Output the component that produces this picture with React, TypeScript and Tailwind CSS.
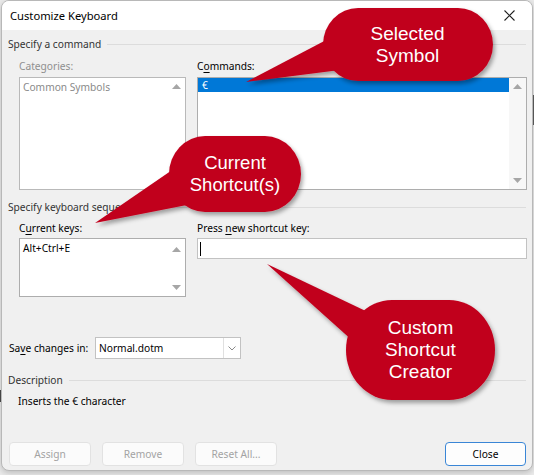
import React from 'react';

const UI = { fontFamily: '"Noto Sans", "Segoe UI", sans-serif' };
const CALLOUT = { fontFamily: '"Liberation Sans", Arial, sans-serif' };

const Up = () => (
  <svg width="9" height="5" viewBox="0 0 9 5">
    <path d="M0 5 L4.5 0 L9 5 Z" fill="#a6a6a6" />
  </svg>
);

const Down = () => (
  <svg width="9" height="5" viewBox="0 0 9 5">
    <path d="M0 0 L4.5 5 L9 0 Z" fill="#a6a6a6" />
  </svg>
);

const GroupHeader: React.FC<{ label: string; className?: string }> = ({ label, className }) => (
  <div className={`flex items-center h-[16px] ${className ?? ''}`}>
    <span className="text-[#333] whitespace-nowrap">{label}</span>
    <div className="flex-1 h-px bg-[#dcdcdc] ml-[6px] mr-[1px]" />
  </div>
);

const Scrollbar: React.FC<{ top: number; bottom: number }> = ({ top, bottom }) => (
  <div className="w-[17px] flex flex-col items-center">
    <div style={{ marginTop: top }}>
      <Up />
    </div>
    <div className="flex-1" />
    <div style={{ marginBottom: bottom }}>
      <Down />
    </div>
  </div>
);

export default function App() {
  return (
    <div className="relative w-[534px] h-[475px] bg-[#ebebeb] overflow-hidden text-[10.2px] leading-[16px] text-black" style={UI}>
      <div className="absolute right-0 top-[95px] w-px h-[30px] bg-[#555]" />
      <div className="absolute left-0 top-[390px] w-px h-[12px] bg-[#444]" />

      {/* dialog window */}
      <div className="ml-px w-[532px] h-[471px] bg-[#f0f0f0] border border-[#b8b8b8] rounded-[8px] overflow-hidden flex flex-col shadow-[0_2px_6px_rgba(0,0,0,0.2)]">
        <div className="h-[29px] bg-white flex items-center justify-between pl-[8px] pr-[17px] shrink-0">
          <span className="text-[11.2px] text-black pt-[1px]">Customize Keyboard</span>
          <svg width="11" height="11" viewBox="0 0 11 11">
            <path d="M0.5 0.5 L10.5 10.5 M10.5 0.5 L0.5 10.5" stroke="#222" strokeWidth="1.1" />
          </svg>
        </div>

        <div className="flex-1 pl-[6px] pr-[5px]">
          <GroupHeader label="Specify a command" className="mt-[6px]" />

          <div className="flex mt-[6px] pl-[11px] gap-[11px]">
            <div className="w-[167px]">
              <div className="text-[#8f8f8f] h-[16px]">Categories:</div>
              <div className="mt-[3px] h-[113px] bg-white border border-[#b9b9b9] flex">
                <div className="flex-1 pl-[3px] pt-[1px] text-[#8a8a8a]">Common Symbols</div>
                <Scrollbar top={6} bottom={6} />
              </div>
            </div>
            <div className="w-[330px]">
              <div className="h-[16px]">
                C<u className="underline-offset-2">o</u>mmands:
              </div>
              <div className="mt-[3px] h-[113px] bg-white border border-[#adadad] flex">
                <div className="flex-1">
                  <div className="h-[14px] bg-[#0078d7] text-white pl-[4px] leading-[14px]">€</div>
                </div>
                <div className="bg-[#f7f7f7] flex">
                  <Scrollbar top={6} bottom={6} />
                </div>
              </div>
            </div>
          </div>

          <GroupHeader label="Specify keyboard sequence" className="mt-[9px]" />

          <div className="flex mt-[5px] pl-[11px] gap-[11px]">
            <div className="w-[167px]">
              <div className="h-[16px]">
                C<u className="underline-offset-2">u</u>rrent keys:
              </div>
              <div className="mt-[2px] h-[59px] bg-white border border-[#adadad] flex">
                <div className="flex-1 pl-[3px] pt-[1px]">Alt+Ctrl+E</div>
                <Scrollbar top={8} bottom={6} />
              </div>
            </div>
            <div className="w-[330px]">
              <div className="h-[16px]">
                Press <u className="underline-offset-2">n</u>ew shortcut key:
              </div>
              <div className="mt-[2px] h-[21px] bg-white border border-[#c2c2c2] flex items-center pl-[2px]">
                <div className="w-px h-[14px] bg-black" />
              </div>
            </div>
          </div>

          <div className="flex items-center mt-[40px]">
            <span className="w-[87px] shrink-0 pl-[1px] whitespace-nowrap">
              Sa<u className="underline-offset-2">v</u>e changes in:
            </span>
            <div className="w-[146px] h-[22px] bg-white border border-[#c2c2c2] flex items-center">
              <span className="flex-1 pl-[3px]">Normal.dotm</span>
              <div className="w-px h-[20px] bg-[#e0e0e0]" />
              <div className="w-[16px] flex justify-center">
                <svg width="8" height="5" viewBox="0 0 8 5">
                  <path d="M0.5 0.5 L4 4 L7.5 0.5" stroke="#8a8a8a" fill="none" strokeWidth="1" />
                </svg>
              </div>
            </div>
          </div>

          <GroupHeader label="Description" className="mt-[13px]" />
          <div className="mt-[5px] ml-[10px]">Inserts the € character</div>

          <div className="flex mt-[33px] px-px">
            <div className="flex gap-[11px]">
              {['Assign', 'Remove', 'Reset All...'].map((b) => (
                <div
                  key={b}
                  className="w-[82px] h-[24px] rounded-[4px] bg-[#fbfbfb] border border-[#e2e2e2] text-[#a3a3a3] flex items-center justify-center"
                >
                  {b}
                </div>
              ))}
            </div>
            <div className="flex-1" />
            <div className="w-[81px] h-[24px] rounded-[4px] bg-[#fdfdfd] border border-[#3a86d6] flex items-center justify-center">
              Close
            </div>
          </div>
        </div>
      </div>

      {/* callout annotations */}
      <svg className="absolute inset-0 pointer-events-none" width="534" height="475" viewBox="0 0 534 475">
        <defs>
          <filter id="sh" x="-20%" y="-20%" width="140%" height="150%">
            <feDropShadow dx="2" dy="3" stdDeviation="2" floodColor="#000" floodOpacity="0.35" />
          </filter>
        </defs>
        <g fill="#c1001f" filter="url(#sh)">
          <path d="M330 38 L246 82 L340 70 Z" />
          <path d="M358 8 H458 A35 36.5 0 0 1 458 81 H358 A35 36.5 0 0 1 358 8 Z" />
          <path d="M178 166 L95 223 L192 204 Z" />
          <path d="M205 136 H265 A36 38 0 0 1 265 212 H205 A36 38 0 0 1 205 136 Z" />
          <path d="M372 314 L267 264 L354 342 Z" />
          <path d="M392 300 H449 A46 50 0 0 1 449 400 H392 A46 50 0 0 1 392 300 Z" />
        </g>
      </svg>
      <div className="absolute left-[322px] top-[8px] w-[171px] h-[73px] flex items-center justify-center text-center text-white text-[19px] leading-[22px]" style={CALLOUT}>
        Selected
        <br />
        Symbol
      </div>
      <div className="absolute left-[169px] top-[136px] w-[132px] h-[76px] flex items-center justify-center text-center text-white text-[18.5px] leading-[22px]" style={CALLOUT}>
        Current
        <br />
        Shortcut(s)
      </div>
      <div className="absolute left-[346px] top-[300px] w-[149px] h-[100px] flex items-center justify-center text-center text-white text-[19px] leading-[22px]" style={CALLOUT}>
        Custom
        <br />
        Shortcut
        <br />
        Creator
      </div>
    </div>
  );
}
